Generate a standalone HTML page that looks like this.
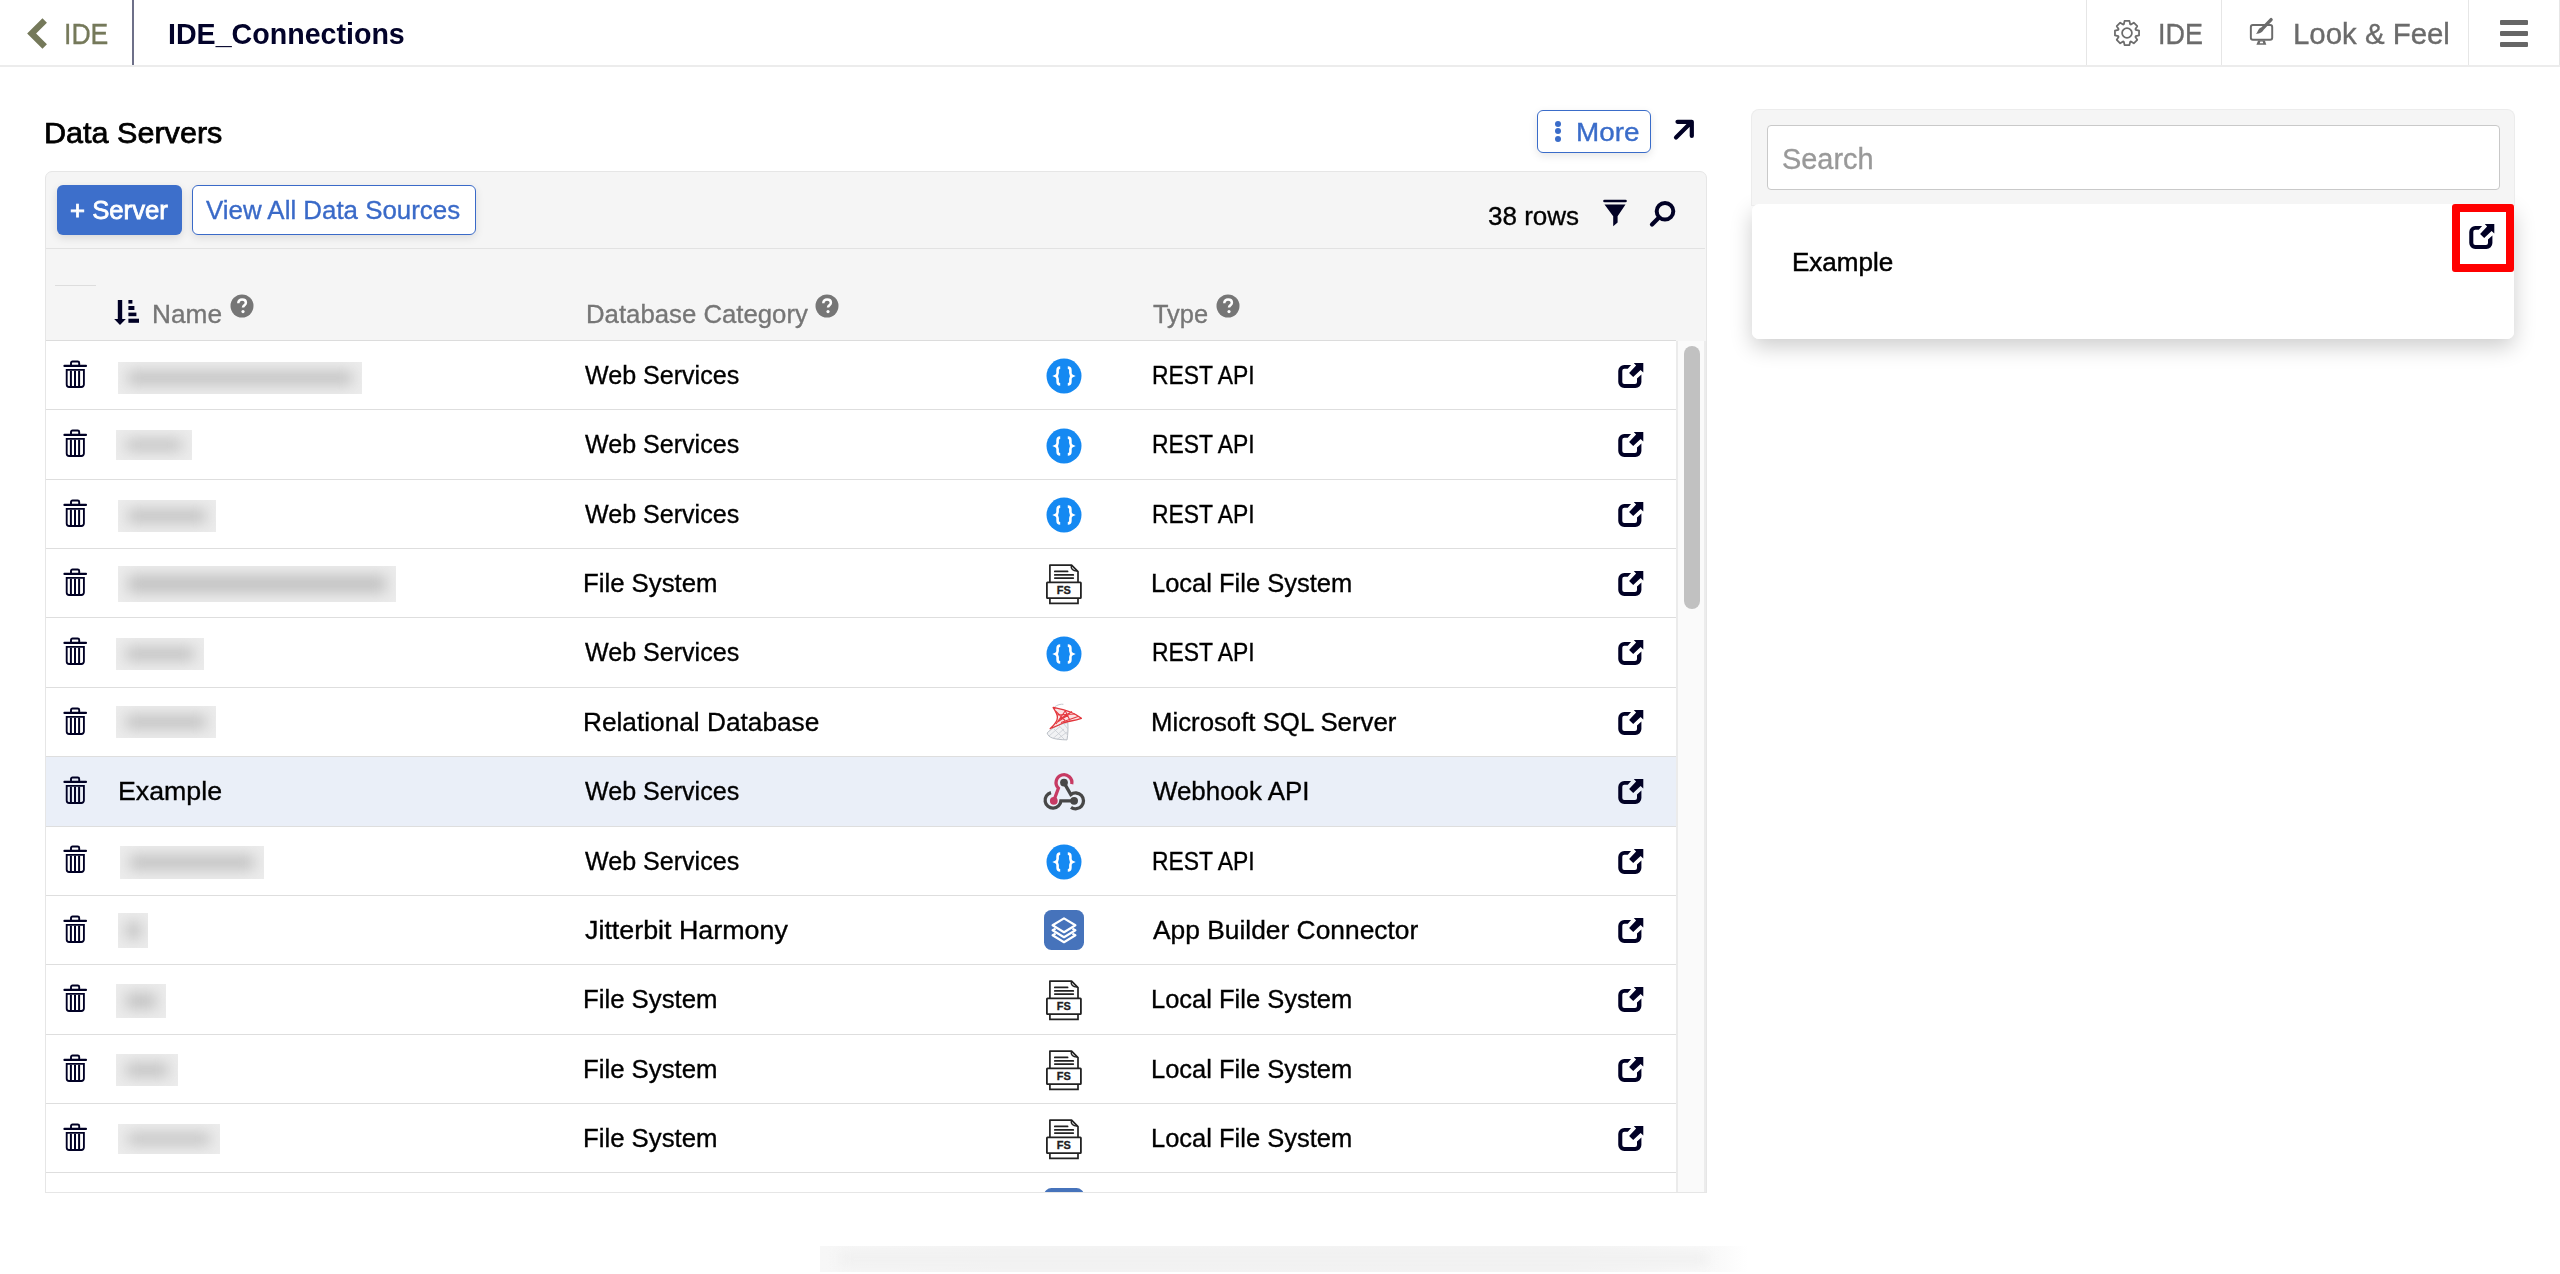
<!DOCTYPE html>
<html><head><meta charset="utf-8"><style>
html,body{margin:0;padding:0;background:#fff;width:2560px;height:1274px;overflow:hidden;position:relative;font-family:"Liberation Sans",sans-serif}
.a{position:absolute}
.t{position:absolute;white-space:pre;font-family:"Liberation Sans",sans-serif;transform-origin:0 0}
.bl{background:#ececec;overflow:hidden}
</style></head><body>
<!-- top bar -->
<div class="a" style="left:0;top:65px;width:2560px;height:2px;background:#ececec"></div>
<svg class="a" style="left:24px;top:16px" width="28" height="36" viewBox="0 0 28 36"><path d="M20.7 4.4L7.6 17.5L20.7 30.6" fill="none" stroke="#75795a" stroke-width="6.3"/></svg>
<div class="a" style="left:132px;top:0;width:2px;height:65px;background:#6e7089"></div>
<div class="a" style="left:2086px;top:0;width:1px;height:65px;background:#e6e6e6"></div>
<div class="a" style="left:2221px;top:0;width:1px;height:65px;background:#e6e6e6"></div>
<div class="a" style="left:2468px;top:0;width:1px;height:65px;background:#e6e6e6"></div>
<div class="a" style="left:2559px;top:0;width:1px;height:65px;background:#e6e6e6"></div>
<svg class="a" style="left:2111px;top:17px" width="32" height="32" viewBox="-16 -16 32 32">
<path fill="none" stroke="#6b6b6b" stroke-width="1.75" stroke-linejoin="round" d="M-3.18 -8.74 L-2.45 -12.05 L2.45 -12.05 L3.18 -8.74 L3.93 -8.43 L6.79 -10.26 L10.26 -6.79 L8.43 -3.93 L8.74 -3.18 L12.05 -2.45 L12.05 2.45 L8.74 3.18 L8.43 3.93 L10.26 6.79 L6.79 10.26 L3.93 8.43 L3.18 8.74 L2.45 12.05 L-2.45 12.05 L-3.18 8.74 L-3.93 8.43 L-6.79 10.26 L-10.26 6.79 L-8.43 3.93 L-8.74 3.18 L-12.05 2.45 L-12.05 -2.45 L-8.74 -3.18 L-8.43 -3.93 L-10.26 -6.79 L-6.79 -10.26 L-3.93 -8.43z"/>
<circle r="4.9" fill="none" stroke="#6b6b6b" stroke-width="1.75"/></svg>
<svg class="a" style="left:2244px;top:14px" width="36" height="36" viewBox="0 0 36 36">
<rect x="6.85" y="10.9" width="21.35" height="14.9" rx="2" fill="none" stroke="#6b6b6b" stroke-width="1.95"/>
<path d="M14.1 26.5H20.9L22.3 30.8H12.4z" fill="#6b6b6b"/>
<path d="M16.3 27.5H18.7L19.3 29.3H15.7z" fill="#fff"/>
<path d="M27.1 5.65L18 15.2" stroke="#6b6b6b" stroke-width="3.4" stroke-linecap="round"/>
<path d="M19.3 16.3C18 18.5 15.5 20 11.9 19.8C13.5 18.5 13.8 16.5 14.8 15.2C15.8 14 17 13.6 17.6 13.9z" fill="#6b6b6b"/>
</svg>
<div class="a" style="left:2500px;top:20px;width:28px;height:5px;background:#666;border-radius:1px"></div>
<div class="a" style="left:2500px;top:31px;width:28px;height:5px;background:#666;border-radius:1px"></div>
<div class="a" style="left:2500px;top:42px;width:28px;height:5px;background:#666;border-radius:1px"></div>

<!-- More button -->
<div class="a" style="left:1537px;top:110px;width:112px;height:41px;border:1px solid #3a6cc9;border-radius:6px;background:#fff;box-shadow:0 3px 8px rgba(0,0,0,.10)"></div>
<div class="a" style="left:1555px;top:120.5px;width:6px;height:6px;border-radius:3px;background:#3a6cc9"></div>
<div class="a" style="left:1555px;top:128px;width:6px;height:6px;border-radius:3px;background:#3a6cc9"></div>
<div class="a" style="left:1555px;top:135.5px;width:6px;height:6px;border-radius:3px;background:#3a6cc9"></div>
<svg class="a" style="left:1670px;top:116px" width="28" height="28" viewBox="0 0 28 28"><path d="M6 21.5L21 6.5M7.5 5.8H21.8V20" fill="none" stroke="#010125" stroke-width="4.2" stroke-linecap="round" stroke-linejoin="round"/></svg>

<!-- table container -->
<div class="a" style="left:45px;top:171px;width:1660px;height:1020px;background:#f5f5f5;border:1px solid #e6e6e6;border-radius:7px 7px 0 0"></div>
<div class="a" style="left:57px;top:185px;width:125px;height:50px;background:#3d6fcb;border-radius:6px;box-shadow:0 3px 8px rgba(0,0,0,.12)"></div>
<div class="a" style="left:192px;top:185px;width:282px;height:48px;background:#fff;border:1px solid #3a6ac8;border-radius:6px;box-shadow:0 3px 8px rgba(0,0,0,.10)"></div>
<svg class="a" style="left:1602px;top:197px" width="26" height="30" viewBox="0 0 26 30">
<path d="M2.5 4H23.5" stroke="#010125" stroke-width="2.6" stroke-linecap="round"/>
<path d="M2.5 7.5H23.5L15.6 19.3V25.5L11.2 29.3V19.3z" fill="#010125"/></svg>
<svg class="a" style="left:1646px;top:196px" width="34" height="34" viewBox="0 0 34 34">
<circle cx="19" cy="15.3" r="8.3" fill="none" stroke="#010125" stroke-width="4"/>
<path d="M13 21.5L6 28.5" stroke="#010125" stroke-width="4.2" stroke-linecap="round"/></svg>
<div class="a" style="left:46px;top:248px;width:1659px;height:1px;background:#e2e2e2"></div>
<div class="a" style="left:55px;top:285px;width:41px;height:1px;background:#dddddd"></div>
<svg class="a" style="left:112px;top:297px" width="30" height="30" viewBox="0 0 30 30">
<path d="M8 3V23" stroke="#010125" stroke-width="4.4"/>
<path d="M2.2 22H13.8L8 28z" fill="#010125"/>
<rect x="16.4" y="3" width="4" height="3.6" fill="#010125"/>
<rect x="16.4" y="9" width="6" height="4" fill="#010125"/>
<rect x="16.4" y="15.6" width="8" height="3.6" fill="#010125"/>
<rect x="16.4" y="21.7" width="10.6" height="4.1" fill="#010125"/>
</svg>
<svg class="a" style="left:229.5px;top:294.3px" width="24" height="24" viewBox="0 0 24 24"><circle cx="12" cy="12" r="11.5" fill="#767676"/><path d="M8.3 9.2c0-2.3 1.6-3.6 3.8-3.6 2.2 0 3.8 1.3 3.8 3.2 0 2.4-2.9 2.5-2.9 4.8" fill="none" stroke="#fff" stroke-width="2.5"/><circle cx="13" cy="17.6" r="1.6" fill="#fff"/></svg><svg class="a" style="left:814.5px;top:294.3px" width="24" height="24" viewBox="0 0 24 24"><circle cx="12" cy="12" r="11.5" fill="#767676"/><path d="M8.3 9.2c0-2.3 1.6-3.6 3.8-3.6 2.2 0 3.8 1.3 3.8 3.2 0 2.4-2.9 2.5-2.9 4.8" fill="none" stroke="#fff" stroke-width="2.5"/><circle cx="13" cy="17.6" r="1.6" fill="#fff"/></svg><svg class="a" style="left:1215.5px;top:294.3px" width="24" height="24" viewBox="0 0 24 24"><circle cx="12" cy="12" r="11.5" fill="#767676"/><path d="M8.3 9.2c0-2.3 1.6-3.6 3.8-3.6 2.2 0 3.8 1.3 3.8 3.2 0 2.4-2.9 2.5-2.9 4.8" fill="none" stroke="#fff" stroke-width="2.5"/><circle cx="13" cy="17.6" r="1.6" fill="#fff"/></svg>
<div class="a" style="left:46px;top:340px;width:1630px;height:1px;background:#dcdcdc"></div>
<div class="a" style="left:46px;top:341px;width:1630px;height:851px;background:#fff"></div>
<div class="a" style="left:1676px;top:341px;width:30px;height:851px;background:#fafafa;border-left:2px solid #ebebeb;border-right:2px solid #ececec;box-sizing:border-box"></div>
<div class="a" style="left:1684px;top:346px;width:16px;height:263px;background:#c1c1c1;border-radius:8px"></div>
<div class="a" style="left:45px;top:1192px;width:1662px;height:1px;background:#e6e6e6"></div>
<div class="a" style="left:0;top:0;width:1676px;height:1192px;overflow:hidden;clip-path:inset(341px 0 0 46px)"><div class="a" style="left:46px;top:409px;width:1630px;height:1px;background:#dedede"></div>
<svg class="a" style="left:62px;top:360px" width="26" height="30" viewBox="0 0 26 30">
<path d="M9 5.7V3a1.5 1.5 0 0 1 1.5-1.5h5.2a1.5 1.5 0 0 1 1.5 1.5v2.7" fill="none" stroke="#010125" stroke-width="1.9"/>
<line x1="2.4" y1="5.9" x2="24" y2="5.9" stroke="#010125" stroke-width="2.1" stroke-linecap="round"/>
<path d="M4.7 9.9V24.5a2.5 2.5 0 0 0 2.5 2.5h12.2a2.5 2.5 0 0 0 2.5-2.5V9.9z" fill="none" stroke="#010125" stroke-width="1.85"/>
<path d="M8.9 10.8V25.9M13 10.8V25.9M17.1 10.8V25.9" stroke="#010125" stroke-width="2"/>
</svg>
<div class="a bl" style="left:118px;top:362px;width:244px;height:32px"><div style="position:absolute;left:10px;right:10px;top:9px;bottom:9px;background:#c2c2c2;filter:blur(7px)"></div></div>
<svg class="a" style="left:1046px;top:358px" width="36" height="36" viewBox="0 0 36 36">
<circle cx="18" cy="18" r="17.5" fill="#1589f2"/>
<path d="M14.2 9.6c-2 0-2.6 1-2.6 2.6v2.8c0 1.5-.6 2.4-2 3 1.4.6 2 1.5 2 3v2.8c0 1.6.6 2.6 2.6 2.6" fill="none" stroke="#fff" stroke-width="2.6"/>
<path d="M21.8 9.6c2 0 2.6 1 2.6 2.6v2.8c0 1.5.6 2.4 2 3-1.4.6-2 1.5-2 3v2.8c0 1.6-.6 2.6-2.6 2.6" fill="none" stroke="#fff" stroke-width="2.6"/>
</svg>
<svg class="a" style="left:1617px;top:362px" width="28" height="28" viewBox="0 0 28 28">
<path d="M16.8 1H26.3V10.4L23.6 7.9L16.2 14.9L12.1 11.1L19.1 3.6z" fill="#010125"/>
<path d="M14.1 2.95H7.3A6 6 0 0 0 1.26 8.95V19.9A6 6 0 0 0 7.26 25.9H18.4A6 6 0 0 0 24.4 19.9V12.5L20 16.4V19.9A2 2 0 0 1 18 21.9H7.3A2 2 0 0 1 5.3 19.9V8.8A2 2 0 0 1 7.3 6.8H10.8z" fill="#010125"/>
</svg>
<div class="a" style="left:46px;top:479px;width:1630px;height:1px;background:#dedede"></div>
<svg class="a" style="left:62px;top:429px" width="26" height="30" viewBox="0 0 26 30">
<path d="M9 5.7V3a1.5 1.5 0 0 1 1.5-1.5h5.2a1.5 1.5 0 0 1 1.5 1.5v2.7" fill="none" stroke="#010125" stroke-width="1.9"/>
<line x1="2.4" y1="5.9" x2="24" y2="5.9" stroke="#010125" stroke-width="2.1" stroke-linecap="round"/>
<path d="M4.7 9.9V24.5a2.5 2.5 0 0 0 2.5 2.5h12.2a2.5 2.5 0 0 0 2.5-2.5V9.9z" fill="none" stroke="#010125" stroke-width="1.85"/>
<path d="M8.9 10.8V25.9M13 10.8V25.9M17.1 10.8V25.9" stroke="#010125" stroke-width="2"/>
</svg>
<div class="a bl" style="left:116px;top:430px;width:76px;height:30px"><div style="position:absolute;left:10px;right:10px;top:9px;bottom:9px;background:#c2c2c2;filter:blur(7px)"></div></div>
<svg class="a" style="left:1046px;top:428px" width="36" height="36" viewBox="0 0 36 36">
<circle cx="18" cy="18" r="17.5" fill="#1589f2"/>
<path d="M14.2 9.6c-2 0-2.6 1-2.6 2.6v2.8c0 1.5-.6 2.4-2 3 1.4.6 2 1.5 2 3v2.8c0 1.6.6 2.6 2.6 2.6" fill="none" stroke="#fff" stroke-width="2.6"/>
<path d="M21.8 9.6c2 0 2.6 1 2.6 2.6v2.8c0 1.5.6 2.4 2 3-1.4.6-2 1.5-2 3v2.8c0 1.6-.6 2.6-2.6 2.6" fill="none" stroke="#fff" stroke-width="2.6"/>
</svg>
<svg class="a" style="left:1617px;top:431px" width="28" height="28" viewBox="0 0 28 28">
<path d="M16.8 1H26.3V10.4L23.6 7.9L16.2 14.9L12.1 11.1L19.1 3.6z" fill="#010125"/>
<path d="M14.1 2.95H7.3A6 6 0 0 0 1.26 8.95V19.9A6 6 0 0 0 7.26 25.9H18.4A6 6 0 0 0 24.4 19.9V12.5L20 16.4V19.9A2 2 0 0 1 18 21.9H7.3A2 2 0 0 1 5.3 19.9V8.8A2 2 0 0 1 7.3 6.8H10.8z" fill="#010125"/>
</svg>
<div class="a" style="left:46px;top:548px;width:1630px;height:1px;background:#dedede"></div>
<svg class="a" style="left:62px;top:499px" width="26" height="30" viewBox="0 0 26 30">
<path d="M9 5.7V3a1.5 1.5 0 0 1 1.5-1.5h5.2a1.5 1.5 0 0 1 1.5 1.5v2.7" fill="none" stroke="#010125" stroke-width="1.9"/>
<line x1="2.4" y1="5.9" x2="24" y2="5.9" stroke="#010125" stroke-width="2.1" stroke-linecap="round"/>
<path d="M4.7 9.9V24.5a2.5 2.5 0 0 0 2.5 2.5h12.2a2.5 2.5 0 0 0 2.5-2.5V9.9z" fill="none" stroke="#010125" stroke-width="1.85"/>
<path d="M8.9 10.8V25.9M13 10.8V25.9M17.1 10.8V25.9" stroke="#010125" stroke-width="2"/>
</svg>
<div class="a bl" style="left:118px;top:500px;width:98px;height:32px"><div style="position:absolute;left:10px;right:10px;top:9px;bottom:9px;background:#c2c2c2;filter:blur(7px)"></div></div>
<svg class="a" style="left:1046px;top:497px" width="36" height="36" viewBox="0 0 36 36">
<circle cx="18" cy="18" r="17.5" fill="#1589f2"/>
<path d="M14.2 9.6c-2 0-2.6 1-2.6 2.6v2.8c0 1.5-.6 2.4-2 3 1.4.6 2 1.5 2 3v2.8c0 1.6.6 2.6 2.6 2.6" fill="none" stroke="#fff" stroke-width="2.6"/>
<path d="M21.8 9.6c2 0 2.6 1 2.6 2.6v2.8c0 1.5.6 2.4 2 3-1.4.6-2 1.5-2 3v2.8c0 1.6-.6 2.6-2.6 2.6" fill="none" stroke="#fff" stroke-width="2.6"/>
</svg>
<svg class="a" style="left:1617px;top:501px" width="28" height="28" viewBox="0 0 28 28">
<path d="M16.8 1H26.3V10.4L23.6 7.9L16.2 14.9L12.1 11.1L19.1 3.6z" fill="#010125"/>
<path d="M14.1 2.95H7.3A6 6 0 0 0 1.26 8.95V19.9A6 6 0 0 0 7.26 25.9H18.4A6 6 0 0 0 24.4 19.9V12.5L20 16.4V19.9A2 2 0 0 1 18 21.9H7.3A2 2 0 0 1 5.3 19.9V8.8A2 2 0 0 1 7.3 6.8H10.8z" fill="#010125"/>
</svg>
<div class="a" style="left:46px;top:617px;width:1630px;height:1px;background:#dedede"></div>
<svg class="a" style="left:62px;top:568px" width="26" height="30" viewBox="0 0 26 30">
<path d="M9 5.7V3a1.5 1.5 0 0 1 1.5-1.5h5.2a1.5 1.5 0 0 1 1.5 1.5v2.7" fill="none" stroke="#010125" stroke-width="1.9"/>
<line x1="2.4" y1="5.9" x2="24" y2="5.9" stroke="#010125" stroke-width="2.1" stroke-linecap="round"/>
<path d="M4.7 9.9V24.5a2.5 2.5 0 0 0 2.5 2.5h12.2a2.5 2.5 0 0 0 2.5-2.5V9.9z" fill="none" stroke="#010125" stroke-width="1.85"/>
<path d="M8.9 10.8V25.9M13 10.8V25.9M17.1 10.8V25.9" stroke="#010125" stroke-width="2"/>
</svg>
<div class="a bl" style="left:118px;top:566px;width:278px;height:36px"><div style="position:absolute;left:10px;right:10px;top:9px;bottom:9px;background:#c2c2c2;filter:blur(7px)"></div></div>
<svg class="a" style="left:1045px;top:564px" width="38" height="42" viewBox="0 0 38 42">
<path d="M4.9 18.5V1.1H26.6L33 7.6V18.5" fill="none" stroke="#222" stroke-width="1.7" stroke-linejoin="round"/>
<path d="M26.3 1.5c-.6 3.2 1.6 5.8 6 5.6" fill="none" stroke="#222" stroke-width="1.5"/>
<path d="M9.8 7.4H22.6M9.8 10.9H28.3M9.8 14.1H28.3" stroke="#222" stroke-width="1.7" stroke-linecap="round"/>
<rect x="1.9" y="18.3" width="34" height="15.9" rx="0.6" fill="#fff" stroke="#222" stroke-width="1.8"/>
<text x="18.7" y="30" text-anchor="middle" style="font-family:'Liberation Sans';font-weight:bold;font-size:11px" fill="#222" stroke="#222" stroke-width="0.3">FS</text>
<path d="M4.9 34.2V39.4H33V34.2" fill="none" stroke="#222" stroke-width="1.7"/>
</svg>
<svg class="a" style="left:1617px;top:570px" width="28" height="28" viewBox="0 0 28 28">
<path d="M16.8 1H26.3V10.4L23.6 7.9L16.2 14.9L12.1 11.1L19.1 3.6z" fill="#010125"/>
<path d="M14.1 2.95H7.3A6 6 0 0 0 1.26 8.95V19.9A6 6 0 0 0 7.26 25.9H18.4A6 6 0 0 0 24.4 19.9V12.5L20 16.4V19.9A2 2 0 0 1 18 21.9H7.3A2 2 0 0 1 5.3 19.9V8.8A2 2 0 0 1 7.3 6.8H10.8z" fill="#010125"/>
</svg>
<div class="a" style="left:46px;top:687px;width:1630px;height:1px;background:#dedede"></div>
<svg class="a" style="left:62px;top:637px" width="26" height="30" viewBox="0 0 26 30">
<path d="M9 5.7V3a1.5 1.5 0 0 1 1.5-1.5h5.2a1.5 1.5 0 0 1 1.5 1.5v2.7" fill="none" stroke="#010125" stroke-width="1.9"/>
<line x1="2.4" y1="5.9" x2="24" y2="5.9" stroke="#010125" stroke-width="2.1" stroke-linecap="round"/>
<path d="M4.7 9.9V24.5a2.5 2.5 0 0 0 2.5 2.5h12.2a2.5 2.5 0 0 0 2.5-2.5V9.9z" fill="none" stroke="#010125" stroke-width="1.85"/>
<path d="M8.9 10.8V25.9M13 10.8V25.9M17.1 10.8V25.9" stroke="#010125" stroke-width="2"/>
</svg>
<div class="a bl" style="left:116px;top:638px;width:88px;height:32px"><div style="position:absolute;left:10px;right:10px;top:9px;bottom:9px;background:#c2c2c2;filter:blur(7px)"></div></div>
<svg class="a" style="left:1046px;top:636px" width="36" height="36" viewBox="0 0 36 36">
<circle cx="18" cy="18" r="17.5" fill="#1589f2"/>
<path d="M14.2 9.6c-2 0-2.6 1-2.6 2.6v2.8c0 1.5-.6 2.4-2 3 1.4.6 2 1.5 2 3v2.8c0 1.6.6 2.6 2.6 2.6" fill="none" stroke="#fff" stroke-width="2.6"/>
<path d="M21.8 9.6c2 0 2.6 1 2.6 2.6v2.8c0 1.5.6 2.4 2 3-1.4.6-2 1.5-2 3v2.8c0 1.6-.6 2.6-2.6 2.6" fill="none" stroke="#fff" stroke-width="2.6"/>
</svg>
<svg class="a" style="left:1617px;top:639px" width="28" height="28" viewBox="0 0 28 28">
<path d="M16.8 1H26.3V10.4L23.6 7.9L16.2 14.9L12.1 11.1L19.1 3.6z" fill="#010125"/>
<path d="M14.1 2.95H7.3A6 6 0 0 0 1.26 8.95V19.9A6 6 0 0 0 7.26 25.9H18.4A6 6 0 0 0 24.4 19.9V12.5L20 16.4V19.9A2 2 0 0 1 18 21.9H7.3A2 2 0 0 1 5.3 19.9V8.8A2 2 0 0 1 7.3 6.8H10.8z" fill="#010125"/>
</svg>
<div class="a" style="left:46px;top:756px;width:1630px;height:1px;background:#dedede"></div>
<svg class="a" style="left:62px;top:707px" width="26" height="30" viewBox="0 0 26 30">
<path d="M9 5.7V3a1.5 1.5 0 0 1 1.5-1.5h5.2a1.5 1.5 0 0 1 1.5 1.5v2.7" fill="none" stroke="#010125" stroke-width="1.9"/>
<line x1="2.4" y1="5.9" x2="24" y2="5.9" stroke="#010125" stroke-width="2.1" stroke-linecap="round"/>
<path d="M4.7 9.9V24.5a2.5 2.5 0 0 0 2.5 2.5h12.2a2.5 2.5 0 0 0 2.5-2.5V9.9z" fill="none" stroke="#010125" stroke-width="1.85"/>
<path d="M8.9 10.8V25.9M13 10.8V25.9M17.1 10.8V25.9" stroke="#010125" stroke-width="2"/>
</svg>
<div class="a bl" style="left:116px;top:706px;width:100px;height:32px"><div style="position:absolute;left:10px;right:10px;top:9px;bottom:9px;background:#c2c2c2;filter:blur(7px)"></div></div>
<svg class="a" style="left:1044px;top:702px" width="40" height="42" viewBox="0 0 40 42">
<g fill="none" stroke-linejoin="round">
<path d="M10.6 4.9C13 2.8 17 1.9 19.4 2.3" stroke="#c5c9ce" stroke-width="1"/>
<path d="M3.1 31C4.5 35.5 9 37.5 23 37.9C24 32 24.2 26 23.8 20.6C15 22 8 26 3.1 31z" fill="#f1f2f4" stroke="#b9bec5" stroke-width="1"/>
<path d="M5 34L16 24.5M9 36.5L20 27M13 37.5L23 30M10 27L20 37M15 23.5L23.5 33M20 22L23.8 27" stroke="#c9cdd3" stroke-width="0.8"/>
<path d="M9.1 5.5C16 7 26 7.5 37.4 16.3C30 19 22 19.5 19 21C14 23.5 10 25 6.1 26.7C10 23 13.5 20 13.4 15.4C13.5 12 11 8.5 9.1 5.5z" fill="#fbe3e4" stroke="#e2353c" stroke-width="1.3"/>
<path d="M11.5 9L21 18.5M13 13L31 12M15 17.5L28 9.5M12 22L21.5 8.5M17 20.5L34 14.5M21 8.2L26 18.5M13.5 20L25 12.5" stroke="#e5393f" stroke-width="1.1"/>
</g></svg>
<svg class="a" style="left:1617px;top:709px" width="28" height="28" viewBox="0 0 28 28">
<path d="M16.8 1H26.3V10.4L23.6 7.9L16.2 14.9L12.1 11.1L19.1 3.6z" fill="#010125"/>
<path d="M14.1 2.95H7.3A6 6 0 0 0 1.26 8.95V19.9A6 6 0 0 0 7.26 25.9H18.4A6 6 0 0 0 24.4 19.9V12.5L20 16.4V19.9A2 2 0 0 1 18 21.9H7.3A2 2 0 0 1 5.3 19.9V8.8A2 2 0 0 1 7.3 6.8H10.8z" fill="#010125"/>
</svg>
<div class="a" style="left:46px;top:757px;width:1630px;height:69px;background:#eaeff8"></div>
<div class="a" style="left:46px;top:826px;width:1630px;height:1px;background:#dedede"></div>
<svg class="a" style="left:62px;top:776px" width="26" height="30" viewBox="0 0 26 30">
<path d="M9 5.7V3a1.5 1.5 0 0 1 1.5-1.5h5.2a1.5 1.5 0 0 1 1.5 1.5v2.7" fill="none" stroke="#010125" stroke-width="1.9"/>
<line x1="2.4" y1="5.9" x2="24" y2="5.9" stroke="#010125" stroke-width="2.1" stroke-linecap="round"/>
<path d="M4.7 9.9V24.5a2.5 2.5 0 0 0 2.5 2.5h12.2a2.5 2.5 0 0 0 2.5-2.5V9.9z" fill="none" stroke="#010125" stroke-width="1.85"/>
<path d="M8.9 10.8V25.9M13 10.8V25.9M17.1 10.8V25.9" stroke="#010125" stroke-width="2"/>
</svg>
<svg class="a" style="left:1042px;top:770px" width="44" height="42" viewBox="1042 770 44 42">
<path d="M1071.7 784.2A7.9 7.9 0 1 0 1058.4 788.2L1053.8 800.8" fill="none" stroke="#c73a63" stroke-width="3.3"/>
<circle cx="1053.8" cy="800.8" r="3.9" fill="#c73a63"/>
<path d="M1064 782.6L1070.8 794.6A7.9 7.9 0 1 1 1071 807.3" fill="none" stroke="#474747" stroke-width="3.3"/>
<circle cx="1064" cy="782.6" r="3.9" fill="#474747"/>
<path d="M1051 792.6A7.9 7.9 0 1 0 1060.9 800.8H1074" fill="none" stroke="#474747" stroke-width="3.3"/>
<circle cx="1074.1" cy="800.8" r="3.9" fill="#474747"/>
</svg>
<svg class="a" style="left:1617px;top:778px" width="28" height="28" viewBox="0 0 28 28">
<path d="M16.8 1H26.3V10.4L23.6 7.9L16.2 14.9L12.1 11.1L19.1 3.6z" fill="#010125"/>
<path d="M14.1 2.95H7.3A6 6 0 0 0 1.26 8.95V19.9A6 6 0 0 0 7.26 25.9H18.4A6 6 0 0 0 24.4 19.9V12.5L20 16.4V19.9A2 2 0 0 1 18 21.9H7.3A2 2 0 0 1 5.3 19.9V8.8A2 2 0 0 1 7.3 6.8H10.8z" fill="#010125"/>
</svg>
<div class="a" style="left:46px;top:895px;width:1630px;height:1px;background:#dedede"></div>
<svg class="a" style="left:62px;top:845px" width="26" height="30" viewBox="0 0 26 30">
<path d="M9 5.7V3a1.5 1.5 0 0 1 1.5-1.5h5.2a1.5 1.5 0 0 1 1.5 1.5v2.7" fill="none" stroke="#010125" stroke-width="1.9"/>
<line x1="2.4" y1="5.9" x2="24" y2="5.9" stroke="#010125" stroke-width="2.1" stroke-linecap="round"/>
<path d="M4.7 9.9V24.5a2.5 2.5 0 0 0 2.5 2.5h12.2a2.5 2.5 0 0 0 2.5-2.5V9.9z" fill="none" stroke="#010125" stroke-width="1.85"/>
<path d="M8.9 10.8V25.9M13 10.8V25.9M17.1 10.8V25.9" stroke="#010125" stroke-width="2"/>
</svg>
<div class="a bl" style="left:120px;top:846px;width:144px;height:33px"><div style="position:absolute;left:10px;right:10px;top:9px;bottom:9px;background:#c2c2c2;filter:blur(7px)"></div></div>
<svg class="a" style="left:1046px;top:844px" width="36" height="36" viewBox="0 0 36 36">
<circle cx="18" cy="18" r="17.5" fill="#1589f2"/>
<path d="M14.2 9.6c-2 0-2.6 1-2.6 2.6v2.8c0 1.5-.6 2.4-2 3 1.4.6 2 1.5 2 3v2.8c0 1.6.6 2.6 2.6 2.6" fill="none" stroke="#fff" stroke-width="2.6"/>
<path d="M21.8 9.6c2 0 2.6 1 2.6 2.6v2.8c0 1.5.6 2.4 2 3-1.4.6-2 1.5-2 3v2.8c0 1.6-.6 2.6-2.6 2.6" fill="none" stroke="#fff" stroke-width="2.6"/>
</svg>
<svg class="a" style="left:1617px;top:848px" width="28" height="28" viewBox="0 0 28 28">
<path d="M16.8 1H26.3V10.4L23.6 7.9L16.2 14.9L12.1 11.1L19.1 3.6z" fill="#010125"/>
<path d="M14.1 2.95H7.3A6 6 0 0 0 1.26 8.95V19.9A6 6 0 0 0 7.26 25.9H18.4A6 6 0 0 0 24.4 19.9V12.5L20 16.4V19.9A2 2 0 0 1 18 21.9H7.3A2 2 0 0 1 5.3 19.9V8.8A2 2 0 0 1 7.3 6.8H10.8z" fill="#010125"/>
</svg>
<div class="a" style="left:46px;top:964px;width:1630px;height:1px;background:#dedede"></div>
<svg class="a" style="left:62px;top:915px" width="26" height="30" viewBox="0 0 26 30">
<path d="M9 5.7V3a1.5 1.5 0 0 1 1.5-1.5h5.2a1.5 1.5 0 0 1 1.5 1.5v2.7" fill="none" stroke="#010125" stroke-width="1.9"/>
<line x1="2.4" y1="5.9" x2="24" y2="5.9" stroke="#010125" stroke-width="2.1" stroke-linecap="round"/>
<path d="M4.7 9.9V24.5a2.5 2.5 0 0 0 2.5 2.5h12.2a2.5 2.5 0 0 0 2.5-2.5V9.9z" fill="none" stroke="#010125" stroke-width="1.85"/>
<path d="M8.9 10.8V25.9M13 10.8V25.9M17.1 10.8V25.9" stroke="#010125" stroke-width="2"/>
</svg>
<div class="a bl" style="left:118px;top:913px;width:30px;height:35px"><div style="position:absolute;left:7.5px;right:7.5px;top:9px;bottom:9px;background:#c2c2c2;filter:blur(7px)"></div></div>
<svg class="a" style="left:1044px;top:910px" width="40" height="40" viewBox="0 0 40 40">
<rect x="0" y="0" width="40" height="40" rx="7.5" fill="#4673bb"/>
<path d="M20 8.4L31.4 15.3L20 22.2L8.6 15.3z" fill="none" stroke="#fff" stroke-width="2.2" stroke-linejoin="round"/>
<path d="M11.6 18.6L8.6 20.3L20 27.2L31.4 20.3L28.4 18.6" fill="none" stroke="#fff" stroke-width="2.2" stroke-linejoin="round"/>
<path d="M11.6 23.6L8.6 25.3L20 32.2L31.4 25.3L28.4 23.6" fill="none" stroke="#fff" stroke-width="2.2" stroke-linejoin="round"/>
</svg>
<svg class="a" style="left:1617px;top:917px" width="28" height="28" viewBox="0 0 28 28">
<path d="M16.8 1H26.3V10.4L23.6 7.9L16.2 14.9L12.1 11.1L19.1 3.6z" fill="#010125"/>
<path d="M14.1 2.95H7.3A6 6 0 0 0 1.26 8.95V19.9A6 6 0 0 0 7.26 25.9H18.4A6 6 0 0 0 24.4 19.9V12.5L20 16.4V19.9A2 2 0 0 1 18 21.9H7.3A2 2 0 0 1 5.3 19.9V8.8A2 2 0 0 1 7.3 6.8H10.8z" fill="#010125"/>
</svg>
<div class="a" style="left:46px;top:1034px;width:1630px;height:1px;background:#dedede"></div>
<svg class="a" style="left:62px;top:984px" width="26" height="30" viewBox="0 0 26 30">
<path d="M9 5.7V3a1.5 1.5 0 0 1 1.5-1.5h5.2a1.5 1.5 0 0 1 1.5 1.5v2.7" fill="none" stroke="#010125" stroke-width="1.9"/>
<line x1="2.4" y1="5.9" x2="24" y2="5.9" stroke="#010125" stroke-width="2.1" stroke-linecap="round"/>
<path d="M4.7 9.9V24.5a2.5 2.5 0 0 0 2.5 2.5h12.2a2.5 2.5 0 0 0 2.5-2.5V9.9z" fill="none" stroke="#010125" stroke-width="1.85"/>
<path d="M8.9 10.8V25.9M13 10.8V25.9M17.1 10.8V25.9" stroke="#010125" stroke-width="2"/>
</svg>
<div class="a bl" style="left:116px;top:984px;width:50px;height:34px"><div style="position:absolute;left:10px;right:10px;top:9px;bottom:9px;background:#c2c2c2;filter:blur(7px)"></div></div>
<svg class="a" style="left:1045px;top:980px" width="38" height="42" viewBox="0 0 38 42">
<path d="M4.9 18.5V1.1H26.6L33 7.6V18.5" fill="none" stroke="#222" stroke-width="1.7" stroke-linejoin="round"/>
<path d="M26.3 1.5c-.6 3.2 1.6 5.8 6 5.6" fill="none" stroke="#222" stroke-width="1.5"/>
<path d="M9.8 7.4H22.6M9.8 10.9H28.3M9.8 14.1H28.3" stroke="#222" stroke-width="1.7" stroke-linecap="round"/>
<rect x="1.9" y="18.3" width="34" height="15.9" rx="0.6" fill="#fff" stroke="#222" stroke-width="1.8"/>
<text x="18.7" y="30" text-anchor="middle" style="font-family:'Liberation Sans';font-weight:bold;font-size:11px" fill="#222" stroke="#222" stroke-width="0.3">FS</text>
<path d="M4.9 34.2V39.4H33V34.2" fill="none" stroke="#222" stroke-width="1.7"/>
</svg>
<svg class="a" style="left:1617px;top:986px" width="28" height="28" viewBox="0 0 28 28">
<path d="M16.8 1H26.3V10.4L23.6 7.9L16.2 14.9L12.1 11.1L19.1 3.6z" fill="#010125"/>
<path d="M14.1 2.95H7.3A6 6 0 0 0 1.26 8.95V19.9A6 6 0 0 0 7.26 25.9H18.4A6 6 0 0 0 24.4 19.9V12.5L20 16.4V19.9A2 2 0 0 1 18 21.9H7.3A2 2 0 0 1 5.3 19.9V8.8A2 2 0 0 1 7.3 6.8H10.8z" fill="#010125"/>
</svg>
<div class="a" style="left:46px;top:1103px;width:1630px;height:1px;background:#dedede"></div>
<svg class="a" style="left:62px;top:1054px" width="26" height="30" viewBox="0 0 26 30">
<path d="M9 5.7V3a1.5 1.5 0 0 1 1.5-1.5h5.2a1.5 1.5 0 0 1 1.5 1.5v2.7" fill="none" stroke="#010125" stroke-width="1.9"/>
<line x1="2.4" y1="5.9" x2="24" y2="5.9" stroke="#010125" stroke-width="2.1" stroke-linecap="round"/>
<path d="M4.7 9.9V24.5a2.5 2.5 0 0 0 2.5 2.5h12.2a2.5 2.5 0 0 0 2.5-2.5V9.9z" fill="none" stroke="#010125" stroke-width="1.85"/>
<path d="M8.9 10.8V25.9M13 10.8V25.9M17.1 10.8V25.9" stroke="#010125" stroke-width="2"/>
</svg>
<div class="a bl" style="left:116px;top:1054px;width:62px;height:32px"><div style="position:absolute;left:10px;right:10px;top:9px;bottom:9px;background:#c2c2c2;filter:blur(7px)"></div></div>
<svg class="a" style="left:1045px;top:1050px" width="38" height="42" viewBox="0 0 38 42">
<path d="M4.9 18.5V1.1H26.6L33 7.6V18.5" fill="none" stroke="#222" stroke-width="1.7" stroke-linejoin="round"/>
<path d="M26.3 1.5c-.6 3.2 1.6 5.8 6 5.6" fill="none" stroke="#222" stroke-width="1.5"/>
<path d="M9.8 7.4H22.6M9.8 10.9H28.3M9.8 14.1H28.3" stroke="#222" stroke-width="1.7" stroke-linecap="round"/>
<rect x="1.9" y="18.3" width="34" height="15.9" rx="0.6" fill="#fff" stroke="#222" stroke-width="1.8"/>
<text x="18.7" y="30" text-anchor="middle" style="font-family:'Liberation Sans';font-weight:bold;font-size:11px" fill="#222" stroke="#222" stroke-width="0.3">FS</text>
<path d="M4.9 34.2V39.4H33V34.2" fill="none" stroke="#222" stroke-width="1.7"/>
</svg>
<svg class="a" style="left:1617px;top:1056px" width="28" height="28" viewBox="0 0 28 28">
<path d="M16.8 1H26.3V10.4L23.6 7.9L16.2 14.9L12.1 11.1L19.1 3.6z" fill="#010125"/>
<path d="M14.1 2.95H7.3A6 6 0 0 0 1.26 8.95V19.9A6 6 0 0 0 7.26 25.9H18.4A6 6 0 0 0 24.4 19.9V12.5L20 16.4V19.9A2 2 0 0 1 18 21.9H7.3A2 2 0 0 1 5.3 19.9V8.8A2 2 0 0 1 7.3 6.8H10.8z" fill="#010125"/>
</svg>
<div class="a" style="left:46px;top:1172px;width:1630px;height:1px;background:#dedede"></div>
<svg class="a" style="left:62px;top:1123px" width="26" height="30" viewBox="0 0 26 30">
<path d="M9 5.7V3a1.5 1.5 0 0 1 1.5-1.5h5.2a1.5 1.5 0 0 1 1.5 1.5v2.7" fill="none" stroke="#010125" stroke-width="1.9"/>
<line x1="2.4" y1="5.9" x2="24" y2="5.9" stroke="#010125" stroke-width="2.1" stroke-linecap="round"/>
<path d="M4.7 9.9V24.5a2.5 2.5 0 0 0 2.5 2.5h12.2a2.5 2.5 0 0 0 2.5-2.5V9.9z" fill="none" stroke="#010125" stroke-width="1.85"/>
<path d="M8.9 10.8V25.9M13 10.8V25.9M17.1 10.8V25.9" stroke="#010125" stroke-width="2"/>
</svg>
<div class="a bl" style="left:118px;top:1124px;width:102px;height:30px"><div style="position:absolute;left:10px;right:10px;top:9px;bottom:9px;background:#c2c2c2;filter:blur(7px)"></div></div>
<svg class="a" style="left:1045px;top:1119px" width="38" height="42" viewBox="0 0 38 42">
<path d="M4.9 18.5V1.1H26.6L33 7.6V18.5" fill="none" stroke="#222" stroke-width="1.7" stroke-linejoin="round"/>
<path d="M26.3 1.5c-.6 3.2 1.6 5.8 6 5.6" fill="none" stroke="#222" stroke-width="1.5"/>
<path d="M9.8 7.4H22.6M9.8 10.9H28.3M9.8 14.1H28.3" stroke="#222" stroke-width="1.7" stroke-linecap="round"/>
<rect x="1.9" y="18.3" width="34" height="15.9" rx="0.6" fill="#fff" stroke="#222" stroke-width="1.8"/>
<text x="18.7" y="30" text-anchor="middle" style="font-family:'Liberation Sans';font-weight:bold;font-size:11px" fill="#222" stroke="#222" stroke-width="0.3">FS</text>
<path d="M4.9 34.2V39.4H33V34.2" fill="none" stroke="#222" stroke-width="1.7"/>
</svg>
<svg class="a" style="left:1617px;top:1125px" width="28" height="28" viewBox="0 0 28 28">
<path d="M16.8 1H26.3V10.4L23.6 7.9L16.2 14.9L12.1 11.1L19.1 3.6z" fill="#010125"/>
<path d="M14.1 2.95H7.3A6 6 0 0 0 1.26 8.95V19.9A6 6 0 0 0 7.26 25.9H18.4A6 6 0 0 0 24.4 19.9V12.5L20 16.4V19.9A2 2 0 0 1 18 21.9H7.3A2 2 0 0 1 5.3 19.9V8.8A2 2 0 0 1 7.3 6.8H10.8z" fill="#010125"/>
</svg>
<svg class="a" style="left:1044px;top:1188px" width="40" height="40" viewBox="0 0 40 40">
<rect x="0" y="0" width="40" height="40" rx="7.5" fill="#4673bb"/>
<path d="M20 8.4L31.4 15.3L20 22.2L8.6 15.3z" fill="none" stroke="#fff" stroke-width="2.2" stroke-linejoin="round"/>
<path d="M11.6 18.6L8.6 20.3L20 27.2L31.4 20.3L28.4 18.6" fill="none" stroke="#fff" stroke-width="2.2" stroke-linejoin="round"/>
<path d="M11.6 23.6L8.6 25.3L20 32.2L31.4 25.3L28.4 23.6" fill="none" stroke="#fff" stroke-width="2.2" stroke-linejoin="round"/>
</svg></div>

<!-- right panel -->
<div class="a" style="left:1752px;top:204px;width:762px;height:135px;border-radius:7px;box-shadow:0 8px 22px rgba(0,0,0,.20)"></div>
<div class="a" style="left:1752px;top:110px;width:762px;height:95px;background:#f5f5f5;border-radius:7px 7px 0 0;box-shadow:0 0 0 1px #ececec"></div>
<div class="a" style="left:1767px;top:125px;width:731px;height:63px;background:#fff;border:1px solid #c9c9c9;border-radius:4px"></div>
<div class="a" style="left:1752px;top:204px;width:762px;height:135px;background:#fff;border-radius:7px"></div>
<div class="a" style="left:2452px;top:204px;width:46px;height:52px;border:8px solid #ff0000;border-radius:3px"></div>
<svg class="a" style="left:2468px;top:222.6px" width="28" height="28" viewBox="0 0 28 28">
<path d="M16.8 1H26.3V10.4L23.6 7.9L16.2 14.9L12.1 11.1L19.1 3.6z" fill="#010125"/>
<path d="M14.1 2.95H7.3A6 6 0 0 0 1.26 8.95V19.9A6 6 0 0 0 7.26 25.9H18.4A6 6 0 0 0 24.4 19.9V12.5L20 16.4V19.9A2 2 0 0 1 18 21.9H7.3A2 2 0 0 1 5.3 19.9V8.8A2 2 0 0 1 7.3 6.8H10.8z" fill="#010125"/>
</svg>

<!-- bottom blurred bar -->
<div class="a" style="left:820px;top:1246px;width:928px;height:26px;background:linear-gradient(90deg,#f7f7f7,#f4f4f4 20%,#f3f3f3 80%,#fafafa 97%,#fff);overflow:hidden"><div style="position:absolute;left:20px;right:40px;top:6px;bottom:6px;background:#f0f0f0;filter:blur(6px)"></div></div>

<div class="t" style="left:63.53px;top:19.00px;font-size:30px;line-height:30px;font-weight:400;color:#75795a;transform:scaleX(0.8872);-webkit-text-stroke:0.35px #75795a;">IDE</div>
<div class="t" style="left:167.69px;top:19.00px;font-size:30px;line-height:30px;font-weight:700;color:#03032a;transform:scaleX(0.9533);">IDE_Connections</div>
<div class="t" style="left:2157.90px;top:19.00px;font-size:30px;line-height:30px;font-weight:400;color:#6b6b6b;transform:scaleX(0.8979);-webkit-text-stroke:0.35px #6b6b6b;">IDE</div>
<div class="t" style="left:2292.74px;top:19.00px;font-size:30px;line-height:30px;font-weight:400;color:#6b6b6b;transform:scaleX(0.9800);-webkit-text-stroke:0.35px #6b6b6b;">Look &amp; Feel</div>
<div class="t" style="left:44.26px;top:118.30px;font-size:30px;line-height:30px;font-weight:400;color:#000;transform:scaleX(1.0188);-webkit-text-stroke:0.75px #000;">Data Servers</div>
<div class="t" style="left:1575.57px;top:119.60px;font-size:25px;line-height:25px;font-weight:400;color:#3a6cc9;transform:scaleX(1.1137);-webkit-text-stroke:0.35px #3a6cc9;">More</div>
<div class="t" style="left:69.81px;top:196.70px;font-size:26px;line-height:26px;font-weight:400;color:#fff;transform:scaleX(0.9885);-webkit-text-stroke:0.8px #fff;">+ Server</div>
<div class="t" style="left:206.00px;top:197.20px;font-size:26px;line-height:26px;font-weight:400;color:#3a6ac8;transform:scaleX(0.9951);-webkit-text-stroke:0.35px #3a6ac8;">View All Data Sources</div>
<div class="t" style="left:1487.60px;top:202.90px;font-size:26px;line-height:26px;font-weight:400;color:#000;transform:scaleX(0.9996);-webkit-text-stroke:0.35px #000;">38 rows</div>
<div class="t" style="left:152.28px;top:301.30px;font-size:26px;line-height:26px;font-weight:400;color:#767676;transform:scaleX(1.0091);-webkit-text-stroke:0.35px #767676;">Name</div>
<div class="t" style="left:586.02px;top:300.70px;font-size:26px;line-height:26px;font-weight:400;color:#767676;transform:scaleX(0.9904);-webkit-text-stroke:0.35px #767676;">Database Category</div>
<div class="t" style="left:1153.40px;top:300.70px;font-size:26px;line-height:26px;font-weight:400;color:#767676;transform:scaleX(0.9766);-webkit-text-stroke:0.35px #767676;">Type</div>
<div class="t" style="left:1782.34px;top:144.20px;font-size:30px;line-height:30px;font-weight:400;color:#999;transform:scaleX(0.9635);-webkit-text-stroke:0.35px #999;">Search</div>
<div class="t" style="left:1791.75px;top:248.90px;font-size:26px;line-height:26px;font-weight:400;color:#000;transform:scaleX(1.0005);-webkit-text-stroke:0.5px #000;">Example</div>
<div class="t" style="left:585.20px;top:362.00px;font-size:26px;line-height:26px;font-weight:400;color:#000;transform:scaleX(0.9643);-webkit-text-stroke:0.35px #000;">Web Services</div>
<div class="t" style="left:1151.64px;top:362.00px;font-size:26px;line-height:26px;font-weight:400;color:#000;transform:scaleX(0.8805);-webkit-text-stroke:0.35px #000;">REST API</div>
<div class="t" style="left:585.20px;top:431.36px;font-size:26px;line-height:26px;font-weight:400;color:#000;transform:scaleX(0.9643);-webkit-text-stroke:0.35px #000;">Web Services</div>
<div class="t" style="left:1151.64px;top:431.36px;font-size:26px;line-height:26px;font-weight:400;color:#000;transform:scaleX(0.8805);-webkit-text-stroke:0.35px #000;">REST API</div>
<div class="t" style="left:585.20px;top:500.72px;font-size:26px;line-height:26px;font-weight:400;color:#000;transform:scaleX(0.9643);-webkit-text-stroke:0.35px #000;">Web Services</div>
<div class="t" style="left:1151.64px;top:500.72px;font-size:26px;line-height:26px;font-weight:400;color:#000;transform:scaleX(0.8805);-webkit-text-stroke:0.35px #000;">REST API</div>
<div class="t" style="left:583.22px;top:570.08px;font-size:26px;line-height:26px;font-weight:400;color:#000;transform:scaleX(0.9898);-webkit-text-stroke:0.35px #000;">File System</div>
<div class="t" style="left:1151.44px;top:570.08px;font-size:26px;line-height:26px;font-weight:400;color:#000;transform:scaleX(0.9805);-webkit-text-stroke:0.35px #000;">Local File System</div>
<div class="t" style="left:585.20px;top:639.44px;font-size:26px;line-height:26px;font-weight:400;color:#000;transform:scaleX(0.9643);-webkit-text-stroke:0.35px #000;">Web Services</div>
<div class="t" style="left:1151.64px;top:639.44px;font-size:26px;line-height:26px;font-weight:400;color:#000;transform:scaleX(0.8805);-webkit-text-stroke:0.35px #000;">REST API</div>
<div class="t" style="left:583.18px;top:708.80px;font-size:26px;line-height:26px;font-weight:400;color:#000;transform:scaleX(1.0091);-webkit-text-stroke:0.35px #000;">Relational Database</div>
<div class="t" style="left:1151.42px;top:708.80px;font-size:26px;line-height:26px;font-weight:400;color:#000;transform:scaleX(0.9909);-webkit-text-stroke:0.35px #000;">Microsoft SQL Server</div>
<div class="t" style="left:118.44px;top:778.16px;font-size:26px;line-height:26px;font-weight:400;color:#000;transform:scaleX(1.0284);-webkit-text-stroke:0.35px #000;">Example</div>
<div class="t" style="left:585.20px;top:778.16px;font-size:26px;line-height:26px;font-weight:400;color:#000;transform:scaleX(0.9643);-webkit-text-stroke:0.35px #000;">Web Services</div>
<div class="t" style="left:1153.40px;top:778.16px;font-size:26px;line-height:26px;font-weight:400;color:#000;transform:scaleX(0.9957);-webkit-text-stroke:0.35px #000;">Webhook API</div>
<div class="t" style="left:585.20px;top:847.52px;font-size:26px;line-height:26px;font-weight:400;color:#000;transform:scaleX(0.9643);-webkit-text-stroke:0.35px #000;">Web Services</div>
<div class="t" style="left:1151.64px;top:847.52px;font-size:26px;line-height:26px;font-weight:400;color:#000;transform:scaleX(0.8805);-webkit-text-stroke:0.35px #000;">REST API</div>
<div class="t" style="left:585.20px;top:916.88px;font-size:26px;line-height:26px;font-weight:400;color:#000;transform:scaleX(1.0321);-webkit-text-stroke:0.35px #000;">Jitterbit Harmony</div>
<div class="t" style="left:1153.40px;top:916.88px;font-size:26px;line-height:26px;font-weight:400;color:#000;transform:scaleX(1.0140);-webkit-text-stroke:0.35px #000;">App Builder Connector</div>
<div class="t" style="left:583.22px;top:986.24px;font-size:26px;line-height:26px;font-weight:400;color:#000;transform:scaleX(0.9898);-webkit-text-stroke:0.35px #000;">File System</div>
<div class="t" style="left:1151.44px;top:986.24px;font-size:26px;line-height:26px;font-weight:400;color:#000;transform:scaleX(0.9805);-webkit-text-stroke:0.35px #000;">Local File System</div>
<div class="t" style="left:583.22px;top:1055.60px;font-size:26px;line-height:26px;font-weight:400;color:#000;transform:scaleX(0.9898);-webkit-text-stroke:0.35px #000;">File System</div>
<div class="t" style="left:1151.44px;top:1055.60px;font-size:26px;line-height:26px;font-weight:400;color:#000;transform:scaleX(0.9805);-webkit-text-stroke:0.35px #000;">Local File System</div>
<div class="t" style="left:583.22px;top:1124.96px;font-size:26px;line-height:26px;font-weight:400;color:#000;transform:scaleX(0.9898);-webkit-text-stroke:0.35px #000;">File System</div>
<div class="t" style="left:1151.44px;top:1124.96px;font-size:26px;line-height:26px;font-weight:400;color:#000;transform:scaleX(0.9805);-webkit-text-stroke:0.35px #000;">Local File System</div>
</body></html>
